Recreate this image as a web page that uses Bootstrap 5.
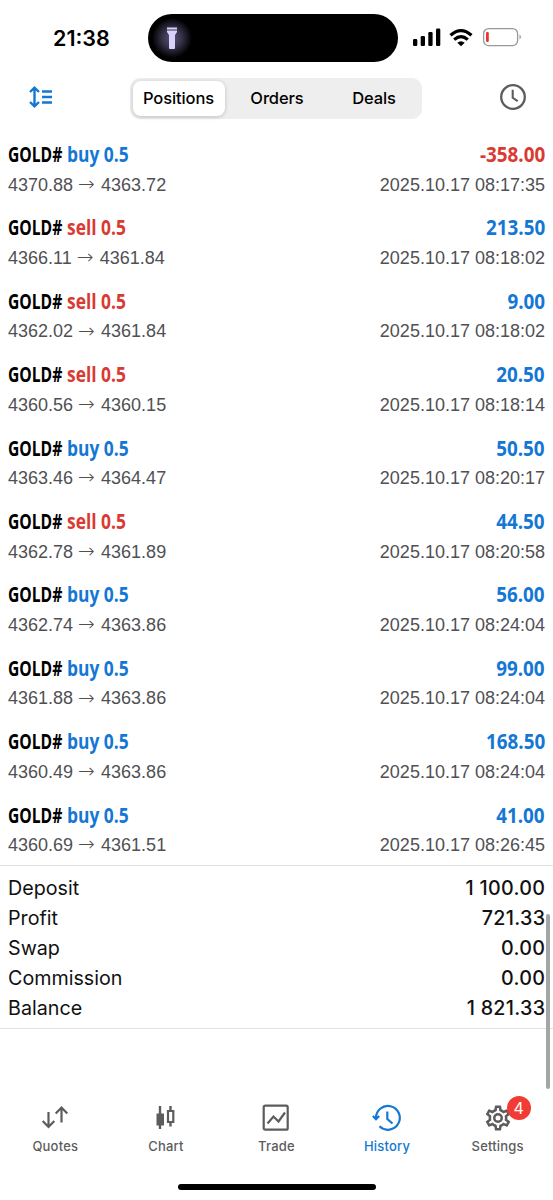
<!DOCTYPE html>
<html lang="en">
<head>
<meta charset="utf-8">
<meta name="viewport" content="width=device-width, initial-scale=1">
<title>History</title>
<link href="https://cdn.jsdelivr.net/npm/bootstrap@5.3.0/dist/css/bootstrap.min.css" rel="stylesheet">
<style>
:root{--up:#1477d4;--down:#d93a32;--ink:#5c5c5c}
body{font-family:Inter,"Liberation Sans",sans-serif;color:#111;background:#fff;height:1200px;overflow:hidden}
svg{display:block;flex:none}
.statusbar{height:76px;padding:14px 31px 0 53px}
.clock{font-size:21.5px;font-weight:600;line-height:48px;width:95px;letter-spacing:0;color:#000}
.island{width:250px;height:48px;border-radius:24px;padding-left:3px;background:#000 radial-gradient(circle at 24px 24px,#5a5474 0,#353148 10px,#000 20px)}
.toolbar{height:55px;padding:2px 26px 0 28px}
.segments{width:292px;height:41px;border-radius:10px;background:#eee;padding:3px;margin:0 51px 0 49px}
.segments .btn{font-size:16.5px;font-weight:500;line-height:35px;padding:0;border:0;color:#000;flex:0 0 97px;letter-spacing:-.1px}
.segments .btn.active{flex-basis:92px;margin-right:5px;background:#fff;border-radius:8px!important;box-shadow:0 1px 4px #0003;color:#000}
.divider{width:1px;height:24px;background:#d0d0d0}
.segments .divider+.btn{padding-left:2px}
.deal{height:73.4px;padding:4px 8px 0}
.deal-top{height:37.6px;line-height:36px;font-family:"Open Sans",sans-serif;font-weight:700;font-size:22px}
.narrow{display:inline-block;transform:scaleX(.79);transform-origin:left;white-space:pre}
.symbol{width:59px;transform:scaleX(.711);color:#000}
.profit{transform:scaleX(.855);transform-origin:right}
.up{color:var(--up)}.down{color:var(--down)}
.deal-sub{font:18px/24px "Liberation Sans",sans-serif;color:#505054}
.arrow{display:inline-block;width:18px;height:20px;line-height:20px;font-family:"DejaVu Sans",sans-serif;font-weight:200;font-size:20px;vertical-align:middle;margin-top:-4px}
.summary{border-top:1px solid #e2e2e2;border-bottom:1px solid #e2e2e2;padding:7.3px 8px 5px;height:164px;font-size:19.7px}
.summary>div{height:30px;line-height:30px}
.summary b{font-weight:500;letter-spacing:.3px;margin-right:-.3px}
.scroll-thumb{position:absolute;right:3px;top:914px;width:4px;height:175px;border-radius:2px;background:#a5a5a5}
.tabs{padding-top:74px;height:152.7px}
.tabs a{color:var(--ink);text-decoration:none;font-size:13px;font-weight:500;line-height:20px;letter-spacing:.2px;width:20%}
.tabs a.on{color:var(--up)}
.tabs svg{margin:0 auto 3px}
.count{position:absolute;left:calc(50% + 9px);top:-7px;width:24px;height:24px;border-radius:50%;background:#f23b34;color:#fff;font-size:16px;font-weight:400;line-height:24px;text-align:center;letter-spacing:0}
.home{width:198px;height:6px;border-radius:3px;background:#000;margin:2px auto 0}
</style>
</head>
<body>
<header>
  <div class="statusbar d-flex align-items-start">
    <div class="clock">21:38</div>
    <div class="island">
      <svg width="42" height="48" viewBox="0 0 42 48" fill="#d8d2fa"><path d="M16 13.5h10v2H16zM16 16.5h10v1.500l-2 3V34q0 1-1 1h-4q-1 0-1-1V21l-2-3z"/></svg>
    </div>
    <svg class="ms-auto" width="110" height="48" viewBox="0 0 110 48">
      <g><rect x="1" y="25" width="4.300" height="7" rx="1.200"/><rect x="8.700" y="22" width="4.300" height="10" rx="1.200"/><rect x="16.300" y="18" width="4.300" height="14" rx="1.200"/><rect x="24" y="14.500" width="4.300" height="17.500" rx="1.200"/></g>
      <g fill="none" stroke="#000" stroke-width="3.200"><path d="M38.500 21.300q10.500-9.500 21 0"/><path d="M42.200 25.600q6.800-6 13.600 0"/></g><path d="M45.300 28.700q3.700-3 7.400 0L49 32.300z"/>
      <rect x="71.600" y="14.600" width="34" height="17" rx="5" fill="none" stroke="#999" stroke-width="1.300"/><rect x="74" y="18" width="2.800" height="10" rx="1.200" fill="#e5392f"/><path d="M107.500 20.500q3 2.500 0 5z" fill="#999"/>
    </svg>
  </div>
  <div class="toolbar d-flex align-items-start justify-content-between">
    <svg width="26" height="41" viewBox="0 0 26 41" fill="none" stroke="#1477d4" stroke-width="2.400"><path d="M6.500 10v18M2 14l4.500-4.300L11 14M2 24l4.500 4.300L11 24M14 13.500h10M14 19h10M14 24.500h10"/></svg>
    <div class="segments btn-group align-items-center">
      <button class="btn active">Positions</button><button class="btn">Orders</button><span class="divider"></span><button class="btn">Deals</button>
    </div>
    <svg width="28" height="41" viewBox="0 0 28 41" fill="none" stroke="#5c5c5c" stroke-width="2.300"><circle cx="14" cy="19" r="11.800"/><path d="M13.700 11.800v8l5 3.300" stroke-width="2.100"/></svg>
  </div>
</header>
<main>
  <div id="deals"></div>
  <section class="summary">
    <div class="d-flex justify-content-between"><span>Deposit</span><b>1 100.00</b></div>
    <div class="d-flex justify-content-between"><span>Profit</span><b>721.33</b></div>
    <div class="d-flex justify-content-between"><span>Swap</span><b>0.00</b></div>
    <div class="d-flex justify-content-between"><span>Commission</span><b>0.00</b></div>
    <div class="d-flex justify-content-between"><span>Balance</span><b>1 821.33</b></div>
  </section>
  <div class="scroll-thumb"></div>
</main>
<footer>
  <nav class="tabs d-flex text-center">
    <a href="#"><svg width="30" height="30" viewBox="0 0 30 30" fill="none" stroke="#5c5c5c" stroke-width="2.200"><path d="M8.500 9v15M2.700 18l5.800 6 5.800-6M21.500 19.500V4.500M15.700 10.500l5.800-6 5.800 6"/></svg>Quotes</a>
    <a href="#"><svg width="30" height="30" viewBox="0 0 30 30" fill="none" stroke="#5c5c5c"><path d="M9 3v23M19.500 3v5M19.500 19v4.500" stroke-width="2.400"/><path d="M5.500 10.500h7.500v12H5.500z" fill="#5c5c5c" stroke="none"/><path d="M17 8h5.300v11H17z" stroke-width="2.200"/></svg>Chart</a>
    <a href="#"><svg width="30" height="30" viewBox="0 0 30 30" fill="none" stroke="#5c5c5c" stroke-width="2.200"><rect x="2.700" y="2.700" width="24" height="24" rx="1.500"/><path d="M6.500 20.500l6-7 5 5 6.500-9"/></svg>Trade</a>
    <a href="#" class="on"><svg width="30" height="30" viewBox="0 0 30 30" fill="none" stroke="#1477d4" stroke-width="2.200"><path d="M4 15.500A11.900 11.900 0 1 1 7.500 23.300M.8 13l3.200 3.200L7.200 13M15.300 8.500v7.500l5.200 4.500"/></svg>History</a>
    <a href="#" class="position-relative"><svg width="30" height="30" viewBox="0 0 24 24" fill="#5c5c5c"><path d="M19.430 12.980c.04-.32.07-.64.07-.98s-.03-.66-.07-.98l2.110-1.650c.19-.15.24-.42.12-.64l-2-3.460a.5.5 0 0 0-.61-.22l-2.490 1a7.300 7.300 0 0 0-1.690-.98l-.38-2.650A.49.49 0 0 0 14 2h-4c-.25 0-.46.18-.49.42l-.38 2.650c-.61.25-1.170.59-1.690.98l-2.490-1a.5.5 0 0 0-.61.22l-2 3.460c-.13.22-.07.49.12.64l2.110 1.650c-.04.32-.07.65-.07.98s.03.66.07.98l-2.110 1.650c-.19.15-.24.42-.12.64l2 3.460c.12.22.39.3.61.22l2.490-1c.52.4 1.080.73 1.690.98l.38 2.650c.03.24.24.42.49.42h4c.25 0 .46-.18.49-.42l.38-2.650c.61-.25 1.170-.59 1.690-.98l2.490 1c.23.09.49 0 .61-.22l2-3.460c.12-.22.07-.49-.12-.64zm-1.980-1.710c.04.31.05.52.05.73s-.02.43-.05.73l-.14 1.130.89.7 1.080.84-.7 1.210-1.270-.51-1.040-.42-.9.680c-.43.32-.84.56-1.250.73l-1.060.43-.16 1.130-.2 1.350h-1.400l-.19-1.350-.16-1.130-1.060-.43a5.700 5.700 0 0 1-1.230-.71l-.91-.7-1.060.43-1.270.51-.7-1.210 1.080-.84.890-.7-.14-1.130a7 7 0 0 1 0-1.460l.14-1.130-.89-.7-1.080-.84.7-1.210 1.270.51 1.040.42.9-.68c.43-.32.84-.56 1.250-.73l1.060-.43.16-1.130.2-1.350h1.390l.19 1.350.16 1.130 1.060.43c.43.18.83.41 1.230.71l.91.7 1.060-.43 1.270-.51.7 1.210-1.070.85-.89.7zM12 8a4 4 0 1 0 0 8 4 4 0 0 0 0-8zm0 6a2 2 0 1 1 0-4 2 2 0 0 1 0 4z"/></svg><span class="count">4</span>Settings</a>
  </nav>
  <div class="home"></div>
</footer>
<script src="https://cdn.jsdelivr.net/npm/bootstrap@5.3.0/dist/js/bootstrap.bundle.min.js"></script>
<script>
const deals=[
["buy","4370.88","4363.72","-358.00","08:17:35"],
["sell","4366.11","4361.84","213.50","08:18:02"],
["sell","4362.02","4361.84","9.00","08:18:02"],
["sell","4360.56","4360.15","20.50","08:18:14"],
["buy","4363.46","4364.47","50.50","08:20:17"],
["sell","4362.78","4361.89","44.50","08:20:58"],
["buy","4362.74","4363.86","56.00","08:24:04"],
["buy","4361.88","4363.86","99.00","08:24:04"],
["buy","4360.49","4363.86","168.50","08:24:04"],
["buy","4360.69","4361.51","41.00","08:26:45"]];
document.getElementById("deals").innerHTML=deals.map(([side,open,close,profit,time])=>`
<div class="deal"><div class="deal-top d-flex"><span class="narrow symbol">GOLD#</span><span class="narrow ${side=="buy"?"up":"down"}">${side} 0.5</span><span class="narrow profit ms-auto ${profit[0]=="-"?"down":"up"}">${profit}</span></div>
<div class="deal-sub d-flex justify-content-between"><span>${open} <span class="arrow">→</span> ${close}</span><span>2025.10.17 ${time}</span></div></div>`).join("");
</script>
</body>
</html>
